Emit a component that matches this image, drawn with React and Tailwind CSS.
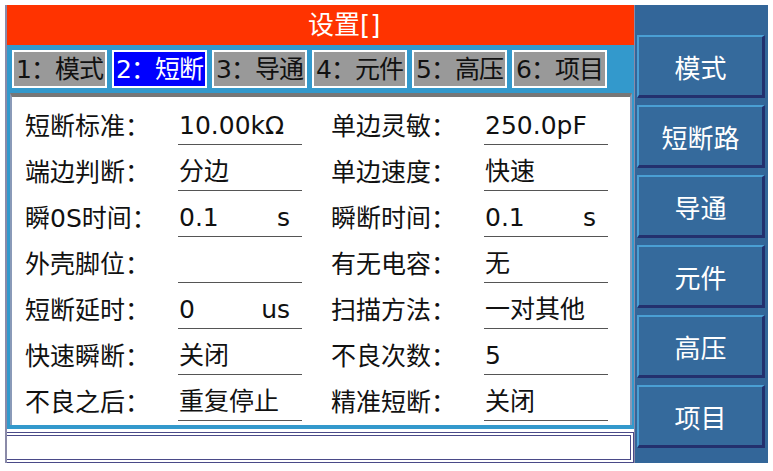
import React from 'react';

const tabs = ['1：模式', '2：短断', '3：导通', '4：元件', '5：高压', '6：项目'];
const sideButtons = ['模式', '短断路', '导通', '元件', '高压', '项目'];

// each row: [label, value, unit] for left and right column
const rows = [
  [['短断标准：', '10.00kΩ'], ['单边灵敏：', '250.0pF']],
  [['端边判断：', '分边'], ['单边速度：', '快速']],
  [['瞬0S时间：', '0.1', 's'], ['瞬断时间：', '0.1', 's']],
  [['外壳脚位：', ''], ['有无电容：', '无']],
  [['短断延时：', '0', 'us'], ['扫描方法：', '一对其他']],
  [['快速瞬断：', '关闭'], ['不良次数：', '5']],
  [['不良之后：', '重复停止'], ['精准短断：', '关闭']],
];

const Field = ({ label, value, unit }) => (
  <div className="flex items-end">
    <div className="w-[153px] h-[40px] flex items-end pb-[3px] text-[25px] leading-[30px] text-[#111] whitespace-nowrap">
      {label}
    </div>
    <div className="w-[124px] h-[40px] flex items-end justify-between pb-[3px] pl-[1px] pr-[12px] border-b border-[#555] text-[25px] leading-[30px] text-[#111] whitespace-nowrap">
      <span>{value}</span>
      {unit && <span>{unit}</span>}
    </div>
  </div>
);

const App = () => {
  return (
    <div className="w-[773px] h-[471px] bg-white pt-[5px] pl-[5px] flex font-['DejaVu_Sans','Noto_Sans_CJK_SC',sans-serif]">
      {/* left side */}
      <div className="w-[629px] h-[458px] flex flex-col border-l-2 border-[#8a8aa8]">
        <div className="h-[40px] bg-[#ff3300] flex items-center pl-[301px] text-white text-[26px] leading-none">
          设置[]
        </div>

        <div className="bg-[#3399cc] flex flex-col pb-[4px]">
          <div className="flex gap-[5px] pl-[5px] pt-[5px] pb-[5px]">
            {tabs.map((t, i) => (
              <div
                key={t}
                className={`w-[95px] h-[38px] flex items-center justify-center border-2 border-white text-[25px] leading-none whitespace-nowrap tracking-[-1px] ${
                  i === 1 ? 'bg-[#0000ff] text-white' : 'bg-[#999999] text-[#111]'
                }`}
              >
                {t}
              </div>
            ))}
          </div>

          <div className="ml-[3px] mr-[2px] h-[332px] bg-white border-t-4 border-t-[#777] border-l-2 border-r-2 border-l-[#8a9ab8] border-r-[#8a9ab8] pl-[13px] pt-[2px] flex flex-col">
            {rows.map((r, i) => (
              <div key={i} className="h-[46px] flex gap-[29px]">
                <Field label={r[0][0]} value={r[0][1]} unit={r[0][2]} />
                <Field label={r[1][0]} value={r[1][1]} unit={r[1][2]} />
              </div>
            ))}
          </div>
        </div>

        <div className="mt-[3px] h-[31px] bg-white border-4 border-double border-[#4a4a88] border-l-0"></div>
      </div>

      {/* right side buttons */}
      <div className="w-[134px] h-[458px] bg-[#336699] border-l border-[#8a8aa8] pt-[30px] pl-[2px] flex flex-col gap-[7px]">
        {sideButtons.map((b) => (
          <div
            key={b}
            className="w-[128px] h-[63px] flex items-center justify-center bg-[#356a9c] border-t-2 border-l-2 border-t-[#4a9fd4] border-l-[#4a9fd4] border-b-[3px] border-r-[3px] border-b-[#23306e] border-r-[#23306e] text-white text-[26px] font-['Noto_Sans_CJK_SC',sans-serif]"
          >
            {b}
          </div>
        ))}
      </div>
    </div>
  );
};

export default App;
